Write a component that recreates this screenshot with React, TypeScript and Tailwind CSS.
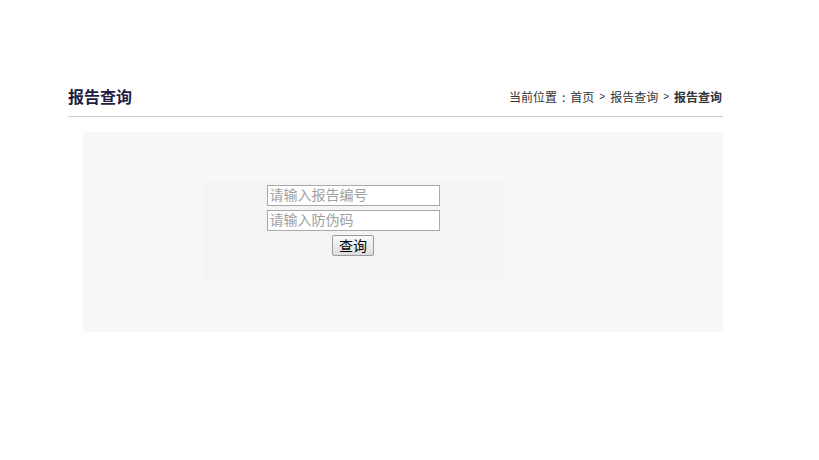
import React from 'react';

const cjk = { fontFamily: '"Noto Sans CJK SC", "Liberation Sans", sans-serif' };

export default function App() {
  return (
    <div className="min-h-[460px] bg-white" style={cjk}>
      <div className="ml-[68px] w-[655px] pt-[84px]">
        <div className="flex items-end justify-between border-b border-[#cccccc] pb-[8px]">
          <h2 className="text-[16px] font-semibold leading-[24px] text-[#1f1d45]">报告查询</h2>
          <div className="mr-[1px] flex items-center text-[12px] leading-[22px] text-[#333333]">
            <span>当前位置</span>
            <span className="px-[5px]">:</span>
            <span>首页</span>
            <span className="px-[5px] font-['Liberation_Sans'] text-[10px]">&gt;</span>
            <span>报告查询</span>
            <span className="px-[5px] font-['Liberation_Sans'] text-[10px]">&gt;</span>
            <span className="font-bold">报告查询</span>
          </div>
        </div>

        <div className="ml-[15px] mt-[15px] h-[200px] w-[640px] bg-[#f7f7f7] pl-[120px] pt-[50px]">
          <div className="flex h-[98px] w-[300px] flex-col items-center gap-[4px] bg-[#f5f4f4] pt-[3px]">
            <input
              type="text"
              placeholder="请输入报告编号"
              className="h-[21px] w-[173px] border border-[#a9a9a9] bg-white px-[2px] pb-[3px] text-[14px] leading-[16px] text-black outline-none placeholder:text-[#a0a0a0]"
            />
            <input
              type="text"
              placeholder="请输入防伪码"
              className="h-[21px] w-[173px] border border-[#a9a9a9] bg-white px-[2px] pb-[3px] text-[14px] leading-[16px] text-black outline-none placeholder:text-[#a0a0a0]"
            />
            <button className="h-[21px] w-[42px] rounded-[2px] border border-[#9a9a9a] bg-gradient-to-b from-[#fbfbfb] to-[#dcdcdc] pb-[1px] text-[14px] leading-[18px] text-black">
              查询
            </button>
          </div>
        </div>
      </div>
    </div>
  );
}
